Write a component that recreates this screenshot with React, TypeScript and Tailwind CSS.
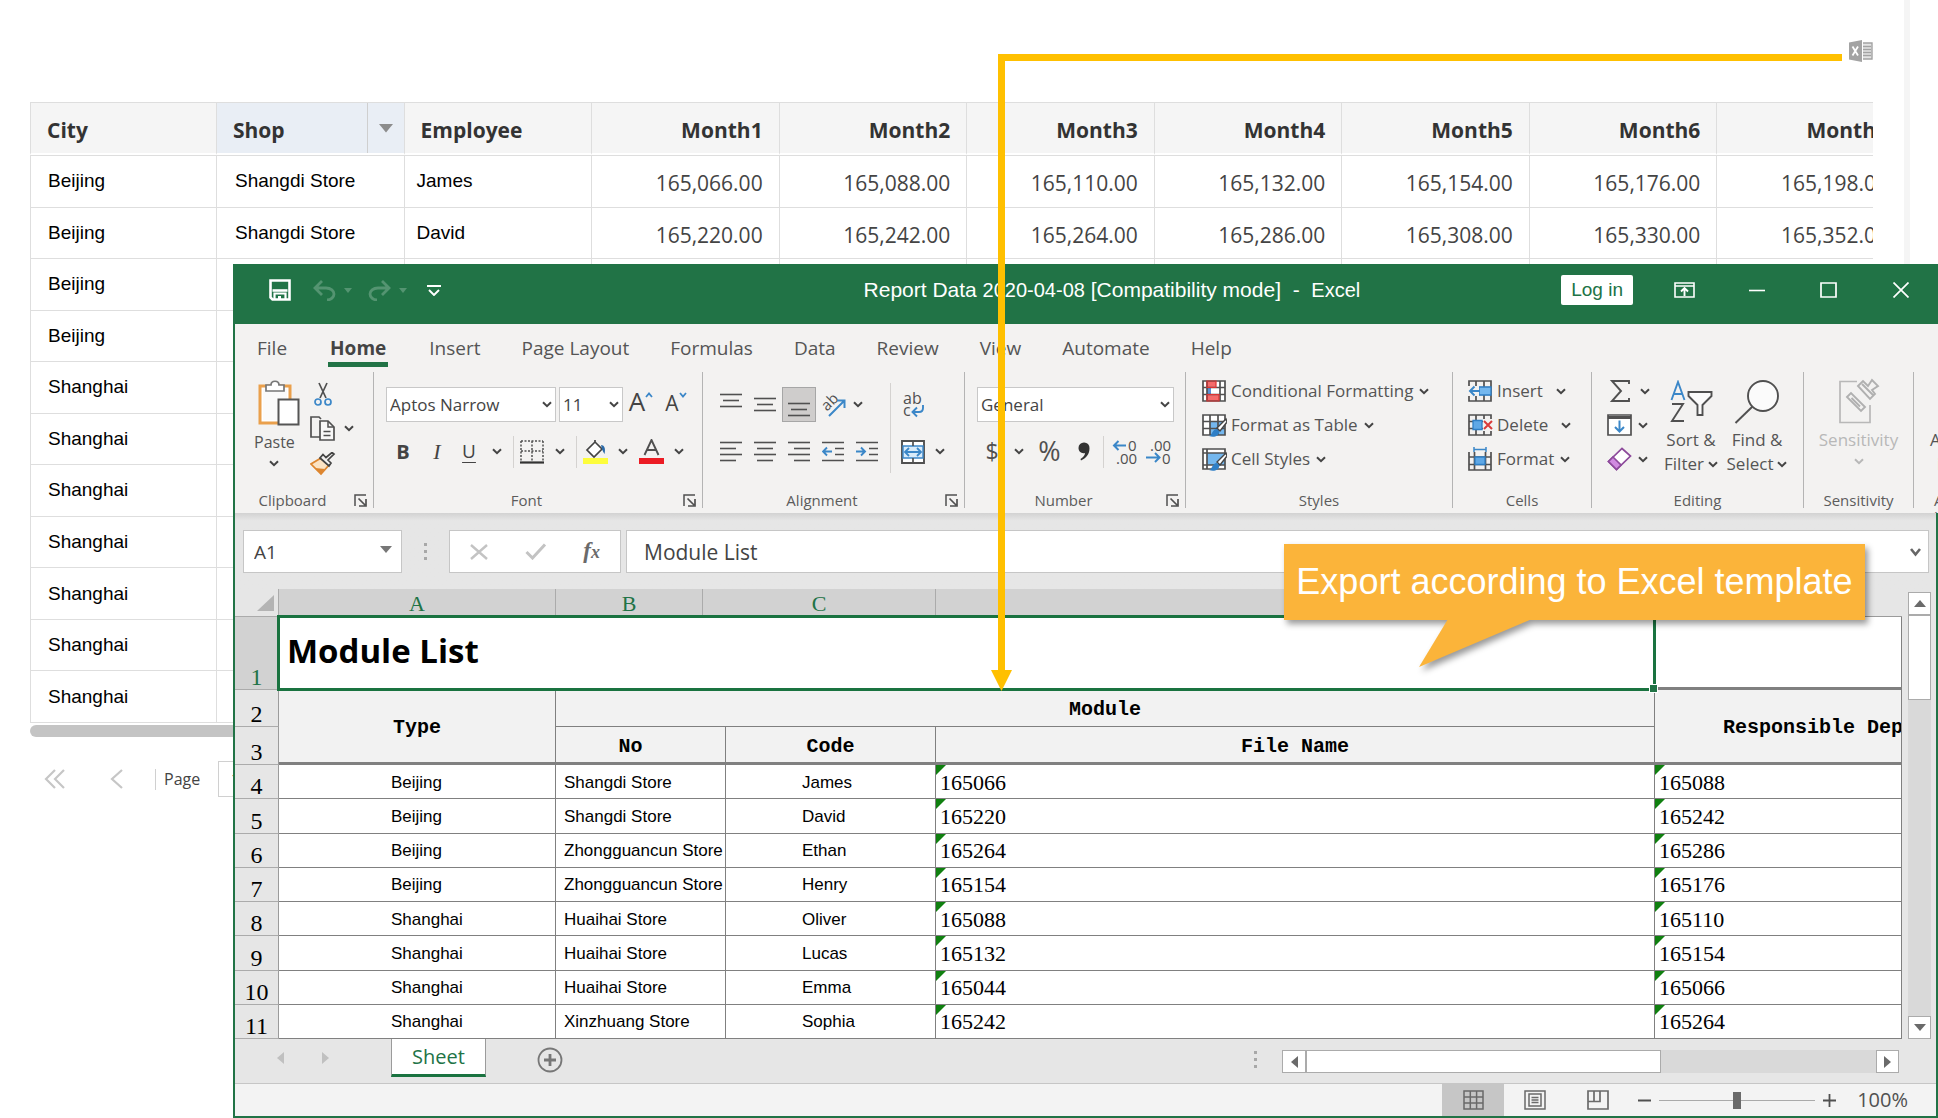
import React from "react";

const SANS = "font-['Open_Sans',sans-serif]";
const ARIAL = "font-['Liberation_Sans',sans-serif]";
const SERIF = "font-['Liberation_Serif',serif]";
const MONO = "font-['Liberation_Mono',monospace]";

type IconProps = { children: React.ReactNode; w: number; h: number; className?: string };

function Svg({ children, w, h, className }: IconProps) {
  return (
    <svg
      width={w}
      height={h}
      viewBox={`0 0 ${w} ${h}`}
      fill="none"
      stroke="#505050"
      strokeWidth="1.7"
      className={`shrink-0 ${className ?? ""}`}
      aria-hidden="true"
    >
      {children}
    </svg>
  );
}

const Chevron = ({ color = "#444" }: { color?: string }) => (
  <Svg w={10} h={7}>
    <path d="M1 1.2 5 5.2 9 1.2" stroke={color} strokeWidth="2" />
  </Svg>
);

/* ---------- report page ---------- */

const months = ["Month1", "Month2", "Month3", "Month4", "Month5", "Month6", "Month7"];

const report: { city: string; shop: string; employee: string; values: string[] }[] = [
  {
    city: "Beijing",
    shop: "Shangdi Store",
    employee: "James",
    values: ["165,066.00", "165,088.00", "165,110.00", "165,132.00", "165,154.00", "165,176.00", "165,198.00"],
  },
  {
    city: "Beijing",
    shop: "Shangdi Store",
    employee: "David",
    values: ["165,220.00", "165,242.00", "165,264.00", "165,286.00", "165,308.00", "165,330.00", "165,352.00"],
  },
  ...["Beijing", "Beijing", "Shanghai", "Shanghai", "Shanghai", "Shanghai", "Shanghai", "Shanghai", "Shanghai"].map(
    (city) => ({ city, shop: "", employee: "", values: ["", "", "", "", "", "", ""] })
  ),
];

function ReportPage() {
  return (
    <div className="flex min-h-screen">
      <main className="min-w-0 flex-1 pl-[30px] pr-[31px]">
        <header className="flex h-[102px] items-center justify-end">
          <button aria-label="Export to Excel">
            <Svg w={24} h={24}>
              <path d="M0 3.5 13 1v22L0 20.5Z" fill="#a3a3a3" stroke="none" />
              <path d="M14 4h9v16h-9" fill="#e4e4e4" stroke="#a3a3a3" strokeWidth="1.4" />
              <path d="M14 7.500h8M14 10.500h8M14 13.500h8M14 16.500h8" stroke="#a3a3a3" strokeWidth="1.3" />
              <path d="M3.500 7.500 9 16.500M9 7.500 3.500 16.500" stroke="#fff" strokeWidth="1.8" />
            </Svg>
          </button>
        </header>
        <div className="overflow-hidden">
          <table className="h-[621px] w-[1874px] table-fixed border-separate border-spacing-0 border-b border-[#dedede]">
            <colgroup>
              <col className="w-[186px]" />
            </colgroup>
            <thead>
              <tr className={`${SANS} h-[53px] bg-[#f5f5f5] text-[21px] leading-7 text-[#333]`}>
                <th className="border-b-2 border-l border-t border-b-white border-l-[#dedede] border-t-[#dedede] px-4 pt-1 text-left">City</th>
                <th className="border-b-2 border-l border-t border-b-white border-l-[#dedede] border-t-[#dedede] bg-[#e9eef5] pl-4 text-left">
                  <div className="flex h-[50px] items-center justify-between">
                    <span className="pt-1">Shop</span>
                    <button aria-label="Shop column menu" className="flex h-full w-[37px] items-center justify-center border-l border-[#cfcfcf]">
                      <Svg w={14} h={9}>
                        <path d="M0 0h14L7 8.500Z" fill="#8c8c8c" stroke="none" />
                      </Svg>
                    </button>
                  </div>
                </th>
                <th className="border-b-2 border-l border-t border-b-white border-l-[#dedede] border-t-[#dedede] px-4 pt-1 text-left">Employee</th>
                {months.map((m) => (
                  <th key={m} className="border-b-2 border-l border-t border-b-white border-l-[#dedede] border-t-[#dedede] px-4 pt-1 text-right">
                    {m}
                  </th>
                ))}
              </tr>
            </thead>
            <tbody className={`${ARIAL} text-[19px] leading-6 text-black`}>
              {report.map((r, i) => (
                <tr key={i} className="h-[51px]">
                  <td className="border-l border-t border-[#dedede] px-[17px]">{r.city}</td>
                  <td className="border-l border-t border-[#dedede] px-[18px]">{r.shop}</td>
                  <td className="border-l border-t border-[#dedede] px-3">{r.employee}</td>
                  {r.values.map((v, j) => (
                    <td key={j} className={`${SANS} border-l border-t border-[#dedede] px-4 pt-1 text-right text-[21px] leading-6 text-[#444]`}>
                      {v}
                    </td>
                  ))}
                </tr>
              ))}
            </tbody>
          </table>
          <div className="mt-0.5 h-3 rounded-full bg-[#c4c4c4]" />
        </div>
        <nav className="mt-6 flex h-9 items-center pl-[14px]" aria-label="Pagination">
          <button aria-label="First page">
            <Svg w={22} h={20}>
              <path d="M11 1 2 10l9 9M20 1l-9 9 9 9" stroke="#c6c6c6" strokeWidth="2.200" />
            </Svg>
          </button>
          <button aria-label="Previous page" className="ml-[44px]">
            <Svg w={14} h={20}>
              <path d="M12 1 2 10l10 9" stroke="#c6c6c6" strokeWidth="2.200" />
            </Svg>
          </button>
          <span className="ml-[31px] h-[21px] w-px bg-[#d0d0d0]" />
          <label htmlFor="page" className={`${SANS} ml-2 w-[54px] text-[16px] text-[#444]`}>
            Page
          </label>
          <input id="page" defaultValue="1" className={`${SANS} h-9 w-16 border border-[#d0d0d0] px-3 text-[16px] text-[#444]`} />
        </nav>
      </main>
      <div className="w-1.5 bg-[#f5f5f5]" />
      <div className="w-7" />
    </div>
  );
}

/* ---------- ribbon ---------- */

function TitleBar() {
  return (
    <div className="flex h-[60px] items-center bg-[#217346] pb-2 pl-[34px] pr-[29px] text-white">
      <button aria-label="Save">
        <Svg w={22} h={22}>
          <path d="M1.500 1.500h19v19h-17l-2-2Z" stroke="#fff" strokeWidth="2.600" />
          <path d="M3.500 11.500h15" stroke="#fff" strokeWidth="2.600" />
          <path d="M5.500 21v-6.500h11V21" stroke="#fff" strokeWidth="2.200" />
          <path d="M9 17h3v4H9Z" fill="#fff" stroke="none" />
        </Svg>
      </button>
      <button aria-label="Undo" className="ml-[22px] flex items-center gap-2">
        <Svg w={23} h={21}>
          <path d="M9 1 2 8l7 7M2 8h11c5 0 8 3 8 6s-3 6-7 6" stroke="#549471" strokeWidth="2.800" />
        </Svg>
        <Svg w={8} h={5}>
          <path d="M0 0h8L4 5Z" fill="#549471" stroke="none" />
        </Svg>
      </button>
      <button aria-label="Redo" className="ml-[16px] flex items-center gap-2">
        <Svg w={23} h={21}>
          <path d="M14 1l7 7-7 7M21 8H10c-5 0-8 3-8 6s3 6 7 6" stroke="#549471" strokeWidth="2.800" />
        </Svg>
        <Svg w={8} h={5}>
          <path d="M0 0h8L4 5Z" fill="#549471" stroke="none" />
        </Svg>
      </button>
      <button aria-label="Customize quick access toolbar" className="ml-[20px]">
        <Svg w={14} h={11}>
          <path d="M0 1h14M2 5l5 5 5-5" stroke="#fff" strokeWidth="1.900" />
        </Svg>
      </button>
      <h1 className={`${ARIAL} ml-auto flex whitespace-pre text-[21px] leading-6`}>
        Report Data <span className="text-[20px]">2020-04-08</span> [Compatibility mode]  -  <span className="text-[20px]">Excel</span>
      </h1>
      <button className={`${ARIAL} ml-[201px] h-[30px] rounded-[2px] bg-white px-[10px] text-[19px] leading-6 text-[#217346]`}>Log in</button>
      <button aria-label="Ribbon display options" className="ml-[41px]">
        <Svg w={21} h={16}>
          <path d="M1 1h19v14H1ZM1 4h19" stroke="#fff" strokeWidth="1.600" />
          <path d="M10.500 14V6M7 9.500 10.500 6 14 9.500" stroke="#fff" strokeWidth="1.900" />
        </Svg>
      </button>
      <button aria-label="Minimize" className="ml-[54px]">
        <Svg w={16} h={16}>
          <path d="M0 8.500h16" stroke="#fff" strokeWidth="1.600" />
        </Svg>
      </button>
      <button aria-label="Maximize" className="ml-[55px]">
        <Svg w={17} h={16}>
          <path d="M1 1h15v14H1Z" stroke="#fff" strokeWidth="1.700" />
        </Svg>
      </button>
      <button aria-label="Close" className="ml-[56px]">
        <Svg w={16} h={16}>
          <path d="M.500.500l15 15M15.500.500l-15 15" stroke="#fff" strokeWidth="1.700" />
        </Svg>
      </button>
    </div>
  );
}

const tabs = ["File", "Home", "Insert", "Page Layout", "Formulas", "Data", "Review", "View", "Automate", "Help"];

function Tabs() {
  return (
    <nav className="flex h-[48px] items-center gap-[41px] pl-[22px] text-[19px] leading-6 text-[#555]">
      {tabs.map((t) =>
        t === "Home" ? (
          <button key={t} className="-mb-[7px] border-b-[5px] border-[#217346] px-0.5 pb-0.5 font-bold text-[#444]">
            {t}
          </button>
        ) : (
          <button key={t}>{t}</button>
        )
      )}
    </nav>
  );
}

function Launcher({ name }: { name: string }) {
  return (
    <button aria-label={`${name} settings`} className="ml-1 mr-1.5">
      <Svg w={13} h={13}>
        <path d="M1 12V1h11" strokeWidth="1.500" />
        <path d="m4.500 4.500 6.500 6.500M12 5v7H5" strokeWidth="1.700" />
      </Svg>
    </button>
  );
}

function Group({ name, width, launcher, children }: { name: string; width: string; launcher?: boolean; children: React.ReactNode }) {
  return (
    <section aria-label={name} className={`${width} flex shrink-0 flex-col border-r border-[#b4b4b4]`}>
      <div className="flex h-[120px]">{children}</div>
      <div className="flex h-4 items-center text-[15px] leading-4 text-[#5c5c5c]">
        <span className="flex-1 text-center">{name}</span>
        {launcher && <Launcher name={name} />}
      </div>
    </section>
  );
}

const Btn = ({ w, label, children, className = "" }: { w: string; label: string; children: React.ReactNode; className?: string }) => (
  <button aria-label={label} className={`${w} ${className} flex h-[35px] shrink-0 items-center justify-center`}>
    {children}
  </button>
);

const Sep = () => <span className="mx-[3px] h-8 w-px shrink-0 bg-[#d4d2d0]" />;

function Pick({ label, value, w }: { label: string; value: string; w: string }) {
  return (
    <div className={`relative ${w} h-[35px] shrink-0`}>
      <select aria-label={label} defaultValue={value} className="h-full w-full appearance-none border border-[#c8c8c8] bg-white pl-[3px] text-[17px] text-[#444]">
        <option>{value}</option>
      </select>
      <span className="pointer-events-none absolute right-1 top-[14px]">
        <Chevron />
      </span>
    </div>
  );
}

/* Text lines of an alignment icon; each entry is [x1, x2]. */
const Lines = ({ rows, top = 1, h = 22 }: { rows: [number, number][]; top?: number; h?: number }) => (
  <Svg w={22} h={h}>
    {rows.map(([a, b], i) => (
      <path key={i} d={`M${a} ${top + i * 6 + 0.5}H${b}`} strokeWidth="1.600" />
    ))}
  </Svg>
);

function ClipboardGroup() {
  return (
    <Group name="Clipboard" width="w-[139px]" launcher>
      <button className="ml-[19px] flex w-[46px] flex-col items-start pt-[8px] text-[16px] leading-5 text-[#555]">
        <Svg w={42} h={46} className="ml-1">
          <path d="M2 6h30v37H2Z" fill="#fff" stroke="#eaa04c" strokeWidth="3" />
          <path d="M5 9h24v31H5Z" fill="#fafafa" stroke="none" />
          <path d="M8 11V5h5c0-5 8-5 8 0h5v6Z" fill="#fff" stroke="#777" strokeWidth="1.700" />
          <path d="M20.500 19.500h20v25h-20Z" fill="#fff" stroke="#555" strokeWidth="2" />
        </Svg>
        <span className="mt-1.5 flex flex-col items-center gap-2">
          Paste
          <Chevron />
        </span>
      </button>
      <div className="ml-2.5 flex flex-col pt-1">
        <Btn w="w-[26px]" label="Cut">
          <Svg w={18} h={24}>
            <path d="M5 1l7 15M13 1 6 16" />
            <circle cx="4" cy="20" r="3" stroke="#3b87c8" />
            <circle cx="14" cy="20" r="3" stroke="#3b87c8" />
          </Svg>
        </Btn>
        <button aria-label="Copy" className="flex h-[35px] items-center gap-2">
          <Svg w={26} h={25}>
            <path d="M10 21H1V1h8l2 2" />
            <path d="M10 5h8l6 6v13H10Z" fill="#f8f8f8" />
            <path d="M18 5v6h6M13.500 15.500h7M13.500 19.500h7" strokeWidth="1.500" />
          </Svg>
          <Chevron />
        </button>
        <Btn w="w-[26px]" label="Format painter">
          <Svg w={26} h={24}>
            <path d="M11 6 1 12l10 10 8-9Z" fill="#fbe3c4" stroke="#dd862f" />
            <path d="m5 16 6 6 4-5Z" fill="#dd862f" stroke="none" />
            <path d="m10 6 9 8 2-3-3-3 6-6-2-1.500-6 5-3-3Z" fill="#f3f2f1" stroke="#444" />
          </Svg>
        </Btn>
      </div>
    </Group>
  );
}

function FontGroup() {
  return (
    <Group name="Font" width="w-[329px]" launcher>
      <div className="flex flex-col gap-3 pl-3 pt-[15px] text-[#444]">
        <div className="flex">
          <Pick label="Font name" value="Aptos Narrow" w="w-[170px]" />
          <span className="w-[3px]" />
          <Pick label="Font size" value="11" w="w-[64px]" />
          <Btn w="w-[36px]" label="Increase font size" className="pb-2">
            <span className="text-[26px] leading-7">A</span>
            <Svg w={8} h={6} className="mb-3">
              <path d="M1 5l3-3.500L7 5" stroke="#3b87c8" strokeWidth="1.800" />
            </Svg>
          </Btn>
          <Btn w="w-[34px]" label="Decrease font size" className="pb-1">
            <span className="text-[21px] leading-7">A</span>
            <Svg w={8} h={6} className="mb-4">
              <path d="M1 1l3 3.500L7 1" stroke="#3b87c8" strokeWidth="1.800" />
            </Svg>
          </Btn>
        </div>
        <div className="flex items-center">
          <Btn w="w-[34px]" label="Bold">
            <span className="text-[20px] font-bold">B</span>
          </Btn>
          <Btn w="w-[34px]" label="Italic">
            <span className="font-['Liberation_Serif',serif] text-[22px] italic">I</span>
          </Btn>
          <Btn w="w-[30px]" label="Underline">
            <span className="text-[19px] underline underline-offset-4">U</span>
          </Btn>
          <Btn w="w-[26px]" label="Underline style">
            <Chevron />
          </Btn>
          <Sep />
          <Btn w="w-[30px]" label="Borders">
            <Svg w={24} h={24}>
              <path d="M1 1v20M12 1v20M23 1v20M1 1h22M1 11h22" strokeWidth="1.500" strokeDasharray="2 1.500" />
              <path d="M0 22.500h24" stroke="#333" strokeWidth="2.200" />
            </Svg>
          </Btn>
          <Btn w="w-[26px]" label="Border style">
            <Chevron />
          </Btn>
          <Sep />
          <Btn w="w-[30px]" label="Fill color">
            <Svg w={25} h={26}>
              <path d="M0 19h25v6H0Z" fill="#fdfd3c" stroke="none" />
              <path d="M12 3 4 11l7 7 8-8-7-7V1" fill="#fff" stroke="#444" />
              <path d="M18 6c3 0 5 3 3.500 9-1-2-2-3-2.500-5Z" fill="#2a6aa8" stroke="none" />
            </Svg>
          </Btn>
          <Btn w="w-[26px]" label="Fill color options">
            <Chevron />
          </Btn>
          <Btn w="w-[30px]" label="Font color">
            <Svg w={25} h={26}>
              <path d="M5.500 16 12.500 1 19.500 16M8 11h9" strokeWidth="1.900" />
              <path d="M0 19h25v6H0Z" fill="#ec1c24" stroke="none" />
            </Svg>
          </Btn>
          <Btn w="w-[26px]" label="Font color options">
            <Chevron />
          </Btn>
        </div>
      </div>
    </Group>
  );
}

function AlignmentGroup() {
  return (
    <Group name="Alignment" width="w-[262px]" launcher>
      <div className="flex flex-col gap-3 pl-[11px] pt-[15px]">
        <div className="flex">
          <Btn w="w-[34px]" label="Top align" className="pb-2">
            <Lines rows={[[0, 22], [3, 19], [0, 22]]} h={15} />
          </Btn>
          <Btn w="w-[34px]" label="Middle align">
            <Lines rows={[[0, 22], [3, 19], [0, 22]]} h={15} />
          </Btn>
          <Btn w="w-[34px]" label="Bottom align" className="border border-[#a6a6a6] bg-[#cfcdcc] pt-2.5">
            <Lines rows={[[0, 22], [3, 19], [0, 22]]} h={15} />
          </Btn>
          <Btn w="w-[34px]" label="Orientation">
            <svg width="26" height="26" viewBox="0 0 26 26" aria-hidden="true">
              <text x="3" y="18" transform="rotate(-45 7 14)" fontSize="15" fill="#505050" className={SANS}>
                ab
              </text>
              <path d="M9 24 24 9M17 8.500h7.500V16" stroke="#3b87c8" strokeWidth="2" fill="none" />
            </svg>
          </Btn>
          <Btn w="w-[16px]" label="Orientation options">
            <Chevron />
          </Btn>
        </div>
        <div className="flex">
          <Btn w="w-[34px]" label="Align left">
            <Lines rows={[[0, 22], [0, 16], [0, 22], [0, 16]]} />
          </Btn>
          <Btn w="w-[34px]" label="Center">
            <Lines rows={[[0, 22], [3, 19], [0, 22], [3, 19]]} />
          </Btn>
          <Btn w="w-[34px]" label="Align right">
            <Lines rows={[[0, 22], [6, 22], [0, 22], [6, 22]]} />
          </Btn>
          <Btn w="w-[34px]" label="Decrease indent">
            <Svg w={22} h={22}>
              <path d="M0 1.500h22M13 7.500h9M13 13.500h9M0 19.500h22" strokeWidth="1.600" />
              <path d="M10 10.500H1.500M5 6.500l-4 4 4 4" stroke="#3b87c8" strokeWidth="1.900" />
            </Svg>
          </Btn>
          <Btn w="w-[34px]" label="Increase indent">
            <Svg w={22} h={22}>
              <path d="M0 1.500h22M13 7.500h9M13 13.500h9M0 19.500h22" strokeWidth="1.600" />
              <path d="M0 10.500h8.500M5 6.500l4 4-4 4" stroke="#3b87c8" strokeWidth="1.900" />
            </Svg>
          </Btn>
        </div>
      </div>
      <span className="ml-1.5 mt-[11px] h-[90px] w-px shrink-0 bg-[#d4d2d0]" />
      <div className="flex flex-col gap-3 pl-2 pt-[15px]">
        <Btn w="w-[28px]" label="Wrap text">
          <svg width="24" height="28" viewBox="0 0 24 28" aria-hidden="true">
            <text x="2" y="13" fontSize="16" fill="#505050" className={SANS}>
              ab
            </text>
            <text x="2" y="25" fontSize="16" fill="#505050" className={SANS}>
              c
            </text>
            <path d="M22 14v3c0 3-2 4-4 4h-6M16 16.500 11.500 21l4.500 4.500" stroke="#3b87c8" strokeWidth="1.900" fill="none" />
          </svg>
        </Btn>
        <div className="flex">
          <Btn w="w-[28px]" label="Merge and center">
            <Svg w={24} h={24}>
              <path d="M1 1h22v22H1Z" fill="#fff" strokeWidth="1.900" />
              <path d="M2 6h20v12H2Z" fill="#d8ebfa" stroke="#3b87c8" strokeWidth="1.400" />
              <path d="M12 1v5M12 18v5" />
              <path d="M4 12h16M8 8l-4 4 4 4M16 8l4 4-4 4" stroke="#3b87c8" strokeWidth="1.800" />
            </Svg>
          </Btn>
          <Btn w="w-[26px]" label="Merge options">
            <Chevron />
          </Btn>
        </div>
      </div>
    </Group>
  );
}

function NumberGroup() {
  return (
    <Group name="Number" width="w-[221px]" launcher>
      <div className="flex flex-col gap-3 pl-3 pt-[15px] text-[#505050]">
        <Pick label="Number format" value="General" w="w-[197px]" />
        <div className="flex items-center">
          <Btn w="w-[30px]" label="Currency">
            <span className="text-[23px]">$</span>
          </Btn>
          <Btn w="w-[24px]" label="Currency options">
            <Chevron />
          </Btn>
          <Btn w="w-[37px]" label="Percent">
            <span className="text-[27px]">%</span>
          </Btn>
          <Btn w="w-[32px]" label="Comma style">
            <Svg w={12} h={19}>
              <path d="M6 .500a5.300 5.300 0 0 1 5.500 5.700c0 6-3.500 10-8.500 12.300l-.500-1.500c3-2 4.500-4 4.500-6C3.500 12 .500 9.500.500 6A5.400 5.400 0 0 1 6 .500Z" fill="#333" stroke="none" />
            </Svg>
          </Btn>
          <Sep />
          <Btn w="w-[34px]" label="Increase decimal">
            <svg width="25" height="26" viewBox="0 0 25 26" aria-hidden="true" fill="#505050">
              <text x="16" y="12" fontSize="15" className={SANS}>0</text>
              <text x="4" y="25" fontSize="15" className={SANS}>.00</text>
              <path d="M14 6.500H2M6.500 2 2 6.500 6.500 11" stroke="#3b87c8" strokeWidth="2" fill="none" />
            </svg>
          </Btn>
          <Btn w="w-[34px]" label="Decrease decimal">
            <svg width="25" height="26" viewBox="0 0 25 26" aria-hidden="true" fill="#505050">
              <text x="4" y="12" fontSize="15" className={SANS}>.00</text>
              <text x="16" y="25" fontSize="15" className={SANS}>0</text>
              <path d="M0 18.500h13M9 14l4.500 4.500L9 23" stroke="#3b87c8" strokeWidth="2" fill="none" />
            </svg>
          </Btn>
        </div>
      </div>
    </Group>
  );
}

const GridLines = () => <path d="M1 1h22v20H1ZM1 7.500h22M1 14.500h22M8 1v20M16 1v20" />;

const Row = ({ icon, text, gap = "gap-1.5" }: { icon: React.ReactNode; text: string; gap?: string }) => (
  <button className="flex h-[34px] items-center gap-1">
    {icon}
    <span className={`flex items-center ${gap}`}>
      {text}
      <Chevron />
    </span>
  </button>
);

const Brush = () => (
  <>
    <path d="m24 5-9 9 3 3 7-9Z" fill="#fff" stroke="#444" strokeWidth="1.400" />
    <path d="M7 22c3 0 3-7 8-7l2.500 2.500C17 22 12 24 7 22Z" fill="#2f7fc6" stroke="none" />
  </>
);

function StylesGroup() {
  return (
    <Group name="Styles" width="w-[267px]">
      <div className="flex flex-col pl-4 pt-0.5 text-[17px] leading-6 text-[#555]">
        <Row
          text="Conditional Formatting"
          icon={
            <Svg w={25} h={23}>
              <path d="M1 1h22v20H1Z" fill="#fff" stroke="none" />
              <path d="M5 1h9v6.500H5ZM5 14.500h12V21H5Z" fill="#f56a6a" stroke="none" />
              <path d="M5 7.500h4v7H5Z" fill="#5b8fd6" stroke="none" />
              <path d="M1 1h22v20H1ZM1 7.500h22M1 14.500h22M5 1v20M18 1v20" />
              <path d="M5 1h9v6.500H5ZM5 14.500h12V21H5Z" stroke="#d33" strokeWidth="1.200" />
            </Svg>
          }
        />
        <Row
          text="Format as Table"
          icon={
            <Svg w={25} h={23}>
              <path d="M1 1h22v20H1Z" fill="#fff" stroke="none" />
              <path d="M8 7.500h15V21H8Z" fill="#74b7ee" stroke="none" />
              <GridLines />
              <Brush />
            </Svg>
          }
        />
        <Row
          text="Cell Styles"
          icon={
            <Svg w={25} h={23}>
              <path d="M1 1h22v20H1Z" fill="#fff" stroke="none" />
              <path d="M5 5h18v12H5Z" fill="#74b7ee" stroke="none" />
              <path d="M1 1h22v20H1ZM1 5h22M5 1v20M1 17h22" />
              <Brush />
            </Svg>
          }
        />
      </div>
    </Group>
  );
}

function CellsGroup() {
  return (
    <Group name="Cells" width="w-[139px]">
      <div className="flex flex-col pl-[15px] pt-0.5 text-[17px] leading-6 text-[#555]">
        <Row
          text="Insert"
          gap="gap-[13px]"
          icon={
            <Svg w={25} h={23}>
              <GridLines />
              <path d="M11 7h12v8H11Z" fill="#74b7ee" stroke="#2f7fc6" strokeWidth="1.300" />
              <path d="M0 6h11v10H0Z" fill="#f3f2f1" stroke="none" />
              <path d="M12 11H2M6.500 6.500 2 11l4.500 4.500" stroke="#3b87c8" strokeWidth="2" />
            </Svg>
          }
        />
        <Row
          text="Delete"
          gap="gap-[13px]"
          icon={
            <Svg w={25} h={23}>
              <GridLines />
              <path d="M5 6.500h9v9H5Z" fill="#5fa8e6" stroke="#2f7fc6" strokeWidth="1.300" />
              <path d="M15 5h10v12H15Z" fill="#f3f2f1" stroke="none" />
              <path d="m16 7 8 8M24 7l-8 8" stroke="#d83b3b" strokeWidth="2" />
            </Svg>
          }
        />
        <Row
          text="Format"
          icon={
            <Svg w={25} h={25}>
              <path d="M1 5v18h22V5M1 10h22M1 17.500h22M6.500 5v18M17.500 5v18" />
              <path d="M7 10h10v7.500H7Z" fill="#5fa8e6" stroke="#2f7fc6" strokeWidth="1.300" />
              <path d="M6 2.500h12M6 0v5M18 0v5" stroke="#3b87c8" strokeWidth="1.500" />
            </Svg>
          }
        />
      </div>
    </Group>
  );
}

function EditingGroup() {
  return (
    <Group name="Editing" width="w-[212px]">
      <div className="flex w-[60px] flex-col pl-[15px] pt-0.5">
        <button aria-label="AutoSum" className="flex h-[34px] items-center gap-[9px]">
          <Svg w={24} h={23}>
            <path d="M22 4V1H5l9 10L5 21h17v-3" strokeWidth="1.900" />
          </Svg>
          <Chevron />
        </button>
        <button aria-label="Fill" className="flex h-[34px] items-center gap-1.5">
          <Svg w={25} h={22}>
            <path d="M1 1h23v20H1Z" fill="#fff" />
            <path d="M1 3.500h23" strokeWidth="3" />
            <path d="M12.500 6.500V18M8 13l4.500 4.500L17 13" stroke="#3b87c8" strokeWidth="2" />
          </Svg>
          <Chevron />
        </button>
        <button aria-label="Clear" className="flex h-[34px] items-center gap-1.5">
          <Svg w={25} h={24}>
            <path d="M15 1.500 23.500 9 9.500 22.500 1.500 14.500Z" fill="#fff" stroke="#8d4a9b" />
            <path d="m6 10 8 8-4.500 4.500-8-8Z" fill="#d08be0" stroke="#8d4a9b" />
          </Svg>
          <Chevron />
        </button>
      </div>
      <button className="ml-[7px] flex w-[64px] flex-col items-center pt-[8px] text-[17px] leading-6 text-[#555]">
        <Svg w={44} h={44}>
          <path d="M2.500 20 9 2l6.500 18M4.500 14h9" stroke="#3b87c8" strokeWidth="1.900" />
          <path d="M3 24h11L3 41h12" strokeWidth="1.900" />
          <path d="M19.500 12h23v4l-9 9v10h-5V25l-9-9Z" fill="#fbfbfb" strokeWidth="1.900" />
        </Svg>
        <span className="whitespace-nowrap pt-1">Sort &amp;</span>
        <span className="flex items-center gap-1">
          Filter <Chevron />
        </span>
      </button>
      <button className="flex w-[68px] flex-col items-center pt-[8px] text-[17px] leading-6 text-[#555]">
        <Svg w={46} h={44}>
          <circle cx="29" cy="16" r="15" fill="#fbfbfb" strokeWidth="1.900" />
          <path d="M18.500 26.500 1.500 43" strokeWidth="1.900" />
        </Svg>
        <span className="whitespace-nowrap pt-1">Find &amp;</span>
        <span className="flex items-center gap-1">
          Select <Chevron />
        </span>
      </button>
    </Group>
  );
}

function SensitivityGroup() {
  return (
    <Group name="Sensitivity" width="w-[110px]">
      <button className="flex flex-1 flex-col items-center pt-[6px] text-[17px] leading-6 text-[#b8b8b8]">
        <Svg w={42} h={46}>
          <path d="M19 3.500H2v41h30V27" stroke="#b8b8b8" fill="none" />
          <path d="m9 19 4-4 14 14-4 4ZM13.500 20l8.500 8.500" stroke="#b0b0b0" strokeWidth="1.900" />
          <path d="m20 8 5-5 5 5 4-6 6 6-6 4 3 4-5 5ZM24 6l11 11" stroke="#b0b0b0" strokeWidth="1.900" />
        </Svg>
        <span className="pt-1">Sensitivity</span>
        <span className="pt-1.5">
          <Chevron color="#b8b8b8" />
        </span>
      </button>
    </Group>
  );
}

function Ribbon() {
  return (
    <div className={`${SANS} bg-[#f3f2f1]`}>
      <Tabs />
      <div className="flex h-[141px] items-start overflow-hidden">
        <ClipboardGroup />
        <FontGroup />
        <AlignmentGroup />
        <NumberGroup />
        <StylesGroup />
        <CellsGroup />
        <EditingGroup />
        <SensitivityGroup />
        <section aria-label="Add-ins" className="min-w-0 flex-1 overflow-hidden pl-4">
          <button className="h-[120px] pt-[40px] text-[17px] leading-6 text-[#555]">Add-ins</button>
          <div className="pl-1 text-[15px] leading-4 text-[#5c5c5c]">Add-ins</div>
        </section>
      </div>
    </div>
  );
}

/* ---------- sheet ---------- */

const Dots = () => (
  <Svg w={4} h={18}>
    <path d="M0 0h3v3H0ZM0 7h3v3H0ZM0 14h3v3H0Z" fill="#a8a8a8" stroke="none" />
  </Svg>
);

function FormulaBar() {
  return (
    <div className={`${SANS} flex h-[76px] items-start bg-gradient-to-b from-[#d2d2d2] from-0% to-[#e6e6e6] to-10% pl-2 pr-[7px] pt-[17px] text-[#444]`}>
      <div className="relative h-[43px] w-[159px] shrink-0">
        <input aria-label="Name box" defaultValue="A1" className="h-full w-full border border-[#c6c6c6] bg-white pl-[10px] text-[19px]" />
        <span className="pointer-events-none absolute right-2.5 top-4">
          <Svg w={12} h={8}>
            <path d="M0 0h12L6 7Z" fill="#777" stroke="none" />
          </Svg>
        </span>
      </div>
      <span className="ml-[22px] mr-[21px] mt-[13px]">
        <Dots />
      </span>
      <div className="flex h-[43px] w-[172px] shrink-0 items-center justify-between border border-[#c6c6c6] bg-white pl-5 pr-5">
        <button aria-label="Cancel">
          <Svg w={18} h={16}>
            <path d="m1 1 16 14M17 1 1 15" stroke="#c3c3c3" strokeWidth="2.400" />
          </Svg>
        </button>
        <button aria-label="Enter">
          <Svg w={22} h={17}>
            <path d="m1.500 9 6 6L20 1.500" stroke="#c3c3c3" strokeWidth="3" />
          </Svg>
        </button>
        <button aria-label="Insert function" className="font-['Liberation_Serif',serif] text-[23px] font-bold italic leading-6 text-[#6a6a6a]">
          f<span className="text-[18px]">x</span>
        </button>
      </div>
      <div className="relative ml-[5px] h-[43px] flex-1">
        <input aria-label="Formula" defaultValue="Module List" className="h-full w-full border border-[#c6c6c6] bg-white pl-[17px] text-[21px]" />
        <span className="pointer-events-none absolute right-2 top-[18px]">
          <Svg w={11} h={9}>
            <path d="m1 1 4.500 5.500L10 1" stroke="#666" strokeWidth="2.600" />
          </Svg>
        </span>
      </div>
    </div>
  );
}

const rows: [string, string, string, string, string][] = [
  ["Beijing", "Shangdi Store", "James", "165066", "165088"],
  ["Beijing", "Shangdi Store", "David", "165220", "165242"],
  ["Beijing", "Zhongguancun Store", "Ethan", "165264", "165286"],
  ["Beijing", "Zhongguancun Store", "Henry", "165154", "165176"],
  ["Shanghai", "Huaihai Store", "Oliver", "165088", "165110"],
  ["Shanghai", "Huaihai Store", "Lucas", "165132", "165154"],
  ["Shanghai", "Huaihai Store", "Emma", "165044", "165066"],
  ["Shanghai", "Xinzhuang Store", "Sophia", "165242", "165264"],
];

const colHead = "border-b border-r border-b-[#9b9b9b] border-r-[#ababab] p-0 align-bottom font-normal";
const rowHead = "border-b border-r border-b-[#ababab] border-r-[#9b9b9b] p-0 align-bottom font-normal leading-6";
const headCell = "border-b border-r border-[#808080] bg-[#f2f2f2] px-0 pb-0 pt-1";
const cell = "whitespace-nowrap border-b border-r border-[#808080] bg-white px-0 pb-0 pt-0.5";

function NumberCell({ value }: { value: string }) {
  return (
    <td className={`${cell} ${SERIF} relative pl-1 text-[22px] leading-6`}>
      <span className="absolute left-0 top-0">
        <Svg w={10} h={10} className="block">
          <path d="M0 0h10L0 10Z" fill="#108010" stroke="none" />
        </Svg>
      </span>
      {value}
    </td>
  );
}

function Sheet() {
  return (
    <div className="flex bg-[#e6e6e6]">
      <div className="min-w-0 flex-1">
        <table className="h-[450px] w-full table-fixed border-separate border-spacing-0 text-black">
          <colgroup>
            <col className="w-[44px]" />
            <col className="w-[277px]" />
            <col className="w-[147px]" />
            <col className="w-[23px]" />
            <col className="w-[210px]" />
            <col className="w-[719px]" />
            <col />
          </colgroup>
          <thead>
            <tr className={`${SERIF} h-7 text-[22px] leading-6 text-[#217346]`}>
              <th aria-label="Select all" className="border-b border-r border-[#ababab] p-0">
                <Svg w={17} h={16} className="ml-[22px]">
                  <path d="M17 0v16H0Z" fill="#b4b4b4" stroke="none" />
                </Svg>
              </th>
              <th className={`${colHead} bg-[#d2d2d2]`}>A</th>
              <th className={`${colHead} bg-[#d2d2d2]`}>B</th>
              <th colSpan={2} className={`${colHead} bg-[#d2d2d2]`}>C</th>
              <th aria-label="D" className={`${colHead} bg-[#d2d2d2]`} />
              <th aria-label="E" className="border-b border-[#9b9b9b] p-0" />
            </tr>
          </thead>
          <tbody>
            <tr className="h-[73px]">
              <th className={`${rowHead} ${SERIF} bg-[#d2d2d2] text-[24px] text-[#217346]`}>1</th>
              <td colSpan={5} className={`${SANS} relative border-b border-r border-[#808080] bg-white pb-1 pl-2 text-[33px] font-bold leading-10`}>
                Module List
                <span className="pointer-events-none absolute -bottom-0.5 -left-0.5 -right-0.5 -top-0.5 z-10 border-[3px] border-[#1a7340]" />
                <span className="absolute -bottom-1 -right-1 z-10 h-[9px] w-[9px] border border-white bg-[#217346]" />
              </td>
              <td className={`${cell} border-b-[3px]`} />
            </tr>
            <tr className={`${MONO} h-[37px] text-[20px] font-bold leading-6`}>
              <th className={`${rowHead} ${SERIF} text-[24px]`}>2</th>
              <th rowSpan={2} className={`${headCell} border-b-[3px]`}>Type</th>
              <th colSpan={4} className={headCell}>Module</th>
              <th rowSpan={2} className={`${headCell} overflow-hidden whitespace-nowrap border-b-[3px] pl-[68px] text-left`}>
                Responsible Department
              </th>
            </tr>
            <tr className={`${MONO} h-[38px] text-[20px] font-bold leading-6`}>
              <th className={`${rowHead} ${SERIF} text-[24px]`}>3</th>
              <th colSpan={2} className={`${headCell} border-b-[3px] pr-5`}>No</th>
              <th className={`${headCell} border-b-[3px]`}>Code</th>
              <th className={`${headCell} border-b-[3px]`}>File Name</th>
            </tr>
            {rows.map((r, i) => (
              <tr key={i} className={`${ARIAL} text-[17px] leading-5`}>
                <th className={`${rowHead} ${SERIF} text-[24px]`}>{i + 4}</th>
                <td className={`${cell} pl-[112px]`}>{r[0]}</td>
                <td colSpan={2} className={`${cell} pl-2`}>{r[1]}</td>
                <td className={`${cell} pl-[76px]`}>{r[2]}</td>
                <NumberCell value={r[3]} />
                <NumberCell value={r[4]} />
              </tr>
            ))}
          </tbody>
        </table>
      </div>
      <div className="ml-1.5 mr-[5px] flex w-[23px] flex-col pt-[3px]">
        <button aria-label="Scroll up" className="flex h-[23px] items-center justify-center border border-[#ababab] bg-white">
          <Svg w={12} h={7}>
            <path d="M0 7h12L6 0Z" fill="#6a6a6a" stroke="none" />
          </Svg>
        </button>
        <div className="flex flex-1 flex-col bg-[#d9d9d9]">
          <div className="h-[85px] border border-[#ababab] bg-white" />
        </div>
        <button aria-label="Scroll down" className="flex h-[23px] items-center justify-center border border-[#ababab] bg-white">
          <Svg w={12} h={7}>
            <path d="M0 0h12L6 7Z" fill="#6a6a6a" stroke="none" />
          </Svg>
        </button>
      </div>
    </div>
  );
}

function SheetTabs() {
  return (
    <div className="flex h-[44px] items-start bg-[#e6e6e6] pl-[42px] pr-[37px]">
      <button aria-label="Previous sheet" className="mt-[13px]">
        <Svg w={7} h={12}>
          <path d="M7 0v12L0 6Z" fill="#c0c0c0" stroke="none" />
        </Svg>
      </button>
      <button aria-label="Next sheet" className="ml-[38px] mt-[13px]">
        <Svg w={7} h={12}>
          <path d="M0 0v12l7-6Z" fill="#c0c0c0" stroke="none" />
        </Svg>
      </button>
      <button className={`${SANS} ml-[62px] h-[38px] w-[95px] border-x border-b-[3px] border-x-[#9b9b9b] border-b-[#1a7340] bg-white text-[20px] leading-8 text-[#217346]`}>
        Sheet
      </button>
      <button aria-label="New sheet" className="ml-[51px] mt-2">
        <Svg w={26} h={26}>
          <circle cx="13" cy="13" r="11.500" stroke="#777" strokeWidth="1.800" />
          <path d="M13 7v12M7 13h12" stroke="#777" strokeWidth="2.800" />
        </Svg>
      </button>
      <span className="ml-auto mt-3">
        <Dots />
      </span>
      <div className="ml-[24px] mt-[11px] flex h-[23px] w-[617px] bg-[#d9d9d9]">
        <button aria-label="Scroll left" className="flex w-6 items-center justify-center border border-[#ababab] bg-white">
          <Svg w={7} h={12}>
            <path d="M7 0v12L0 6Z" fill="#6a6a6a" stroke="none" />
          </Svg>
        </button>
        <div className="w-[355px] border border-[#ababab] bg-white" />
        <button aria-label="Scroll right" className="ml-auto flex w-[23px] items-center justify-center border border-[#ababab] bg-white">
          <Svg w={7} h={12}>
            <path d="M0 0v12l7-6Z" fill="#6a6a6a" stroke="none" />
          </Svg>
        </button>
      </div>
    </div>
  );
}

function StatusBar() {
  return (
    <div className={`${SANS} flex h-[33px] items-center justify-end border-t border-[#c6c6c6] bg-[#f3f3f3] pr-7 text-[20px] text-[#505050]`}>
      <button aria-label="Normal view" className="flex h-full w-[62px] items-center justify-center bg-[#c6c6c6]">
        <Svg w={21} h={20}>
          <path d="M1 1h19v18H1ZM1 7h19M1 13h19M7.300 1v18M13.600 1v18" stroke="#6a6a6a" strokeWidth="1.500" />
        </Svg>
      </button>
      <button aria-label="Page layout view" className="ml-5">
        <Svg w={22} h={20}>
          <path d="M1 1h20v18H1ZM5 4h12v12H5ZM7.500 7.500h7M7.500 10h7M7.500 12.500h7" stroke="#6a6a6a" strokeWidth="1.500" />
        </Svg>
      </button>
      <button aria-label="Page break preview" className="ml-[41px]">
        <Svg w={22} h={20}>
          <path d="M1 1h20v18H1ZM1 11.500h12V1M7 1v10.500" stroke="#6a6a6a" strokeWidth="1.700" />
        </Svg>
      </button>
      <button aria-label="Zoom out" className="ml-[29px]">
        <Svg w={13} h={13}>
          <path d="M0 6.500h13" strokeWidth="2" />
        </Svg>
      </button>
      <input
        type="range"
        aria-label="Zoom"
        defaultValue={50}
        className="ml-2 h-[18px] w-[156px] appearance-none bg-transparent [&::-webkit-slider-runnable-track]:h-px [&::-webkit-slider-runnable-track]:bg-[#aaa] [&::-webkit-slider-thumb]:-mt-2 [&::-webkit-slider-thumb]:h-[17px] [&::-webkit-slider-thumb]:w-2 [&::-webkit-slider-thumb]:appearance-none [&::-webkit-slider-thumb]:bg-[#6a6a6a]"
      />
      <button aria-label="Zoom in" className="ml-2">
        <Svg w={13} h={13}>
          <path d="M0 6.500h13M6.500 0v13" strokeWidth="1.800" />
        </Svg>
      </button>
      <span className="ml-5 w-[52px] text-right">100%</span>
    </div>
  );
}

function ExcelWindow() {
  return (
    <div className="absolute left-[233px] right-0 top-[264px] border-b-2 border-l-2 border-[#217346]">
      <TitleBar />
      <Ribbon />
      <div className="border-r-2 border-[#217346]">
        <FormulaBar />
        <Sheet />
        <SheetTabs />
        <StatusBar />
      </div>
    </div>
  );
}

export default function App() {
  return (
    <div className="relative min-h-screen overflow-hidden bg-white">
      <ReportPage />
      <ExcelWindow />
      <svg width="852" height="640" viewBox="0 0 852 640" className="pointer-events-none absolute left-[991px] top-[54px] z-20" aria-hidden="true">
        <path d="M851 3.500H10.500V622" fill="none" stroke="#ffc000" strokeWidth="7" />
        <path d="M0 616h21L10.500 637Z" fill="#ffc000" />
      </svg>
      <div className="absolute right-[73px] top-[544px] z-30 drop-shadow-[3px_4px_3px_rgba(0,0,0,0.4)]">
        <p className={`${ARIAL} flex h-[76px] w-[581px] items-center justify-center whitespace-nowrap bg-[#fbb43a] text-[36px] text-white`}>
          Export according to Excel template
        </p>
        <svg width="120" height="50" viewBox="0 0 120 50" className="absolute left-[134px] top-[75px]" aria-hidden="true">
          <path d="M30 0h84L1 48Z" fill="#fbb43a" />
        </svg>
      </div>
    </div>
  );
}
